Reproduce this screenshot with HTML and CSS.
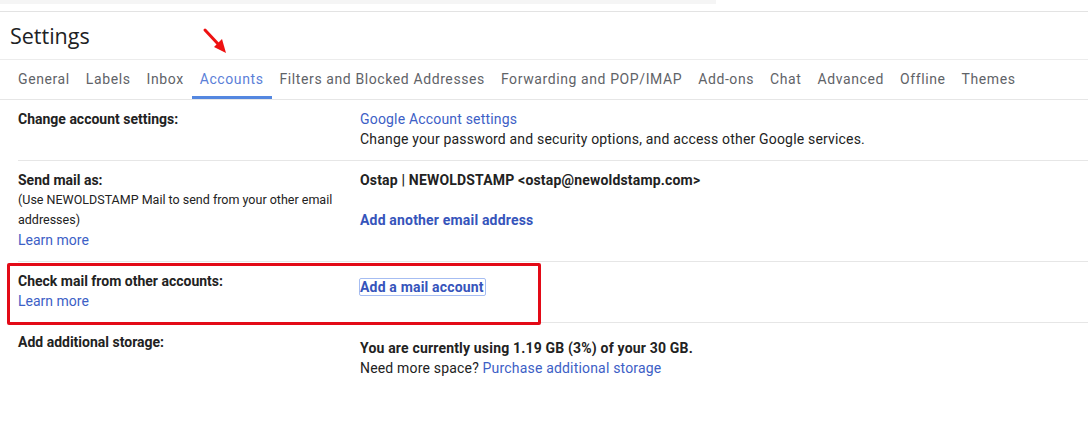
FILE: index.html
```html
<!DOCTYPE html>
<html>
<head>
<meta charset="utf-8">
<link rel="stylesheet" href="styles.css">
</head>
<body>
<div class="page">
  <div class="topstrip"></div>
  <header class="header"><h1 class="title">Settings</h1></header>
  <nav class="tabs">
    <span class="tab">General</span>
    <span class="tab">Labels</span>
    <span class="tab">Inbox</span>
    <span class="tab active">Accounts</span>
    <span class="tab">Filters and Blocked Addresses</span>
    <span class="tab">Forwarding and POP/IMAP</span>
    <span class="tab">Add-ons</span>
    <span class="tab">Chat</span>
    <span class="tab">Advanced</span>
    <span class="tab">Offline</span>
    <span class="tab">Themes</span>
  </nav>
  <main class="rows">
    <section class="row">
      <div class="label"><div class="bold">Change account settings:</div></div>
      <div class="value">
        <div><a class="link">Google Account settings</a></div>
        <div>Change your password and security options, and access other Google services.</div>
      </div>
    </section>
    <section class="row">
      <div class="label">
        <div class="bold">Send mail as:</div>
        <div class="small">(Use NEWOLDSTAMP Mail to send from your other email addresses)</div>
        <div><a class="link">Learn more</a></div>
      </div>
      <div class="value">
        <div class="bold">Ostap | NEWOLDSTAMP &lt;ostap@newoldstamp.com&gt;</div>
        <div class="spaced"><a class="link bold">Add another email address</a></div>
      </div>
    </section>
    <section class="row">
      <div class="label">
        <div class="bold">Check mail from other accounts:</div>
        <div><a class="link">Learn more</a></div>
      </div>
      <div class="value offset">
        <div><a class="link bold focused">Add a mail account</a></div>
      </div>
    </section>
    <section class="row last">
      <div class="label"><div class="bold">Add additional storage:</div></div>
      <div class="value offset">
        <div class="bold">You are currently using 1.19 GB (3%) of your 30 GB.</div>
        <div>Need more space? <a class="link">Purchase additional storage</a></div>
      </div>
    </section>
  </main>
  <div class="highlight"></div>
  <svg class="arrow" width="40" height="40" viewBox="0 0 40 40">
    <line x1="3" y1="3" x2="17" y2="18" stroke="#ee1111" stroke-width="3" stroke-linecap="round"/>
    <polygon points="24,26 12,20 20,12" fill="#ee1111"/>
  </svg>
</div>
</body>
</html>
```
FILE: styles.css
```css
* { box-sizing: border-box; }
html, body { margin: 0; padding: 0; background: #fff; }
body {
  font-family: Roboto, "Liberation Sans", Arial, sans-serif;
  font-size: 14px;
  color: #222;
  width: 1088px;
  height: 427px;
  overflow: hidden;
}
.page { position: relative; width: 1088px; height: 427px; }
.topstrip { width: 716px; height: 4px; background: #f5f5f5; }
.header {
  margin-top: 7px;
  border-top: 1px solid #e3e3e3;
  height: 48px;
  display: flex;
  align-items: center;
  padding-left: 10px;
}
.title {
  margin: 0;
  font-family: "Open Sans", Roboto, sans-serif;
  font-weight: 400;
  font-size: 21.5px;
  color: #202124;
}
.tabs {
  border-top: 1px solid #ececec;
  border-bottom: 1px solid #e6e6e6;
  height: 41px;
  display: flex;
  padding-left: 10px;
}
.tab {
  padding: 1px 8px 0;
  display: flex;
  align-items: center;
  font-family: Roboto, sans-serif;
  font-size: 14px;
  letter-spacing: 0.6px;
  color: #5f6368;
  border-bottom: 3px solid transparent;
}
.tab.active { color: #5b80d8; border-bottom-color: #5487e0; }
.rows { display: flex; flex-direction: column; }
.row {
  margin-left: 18px;
  display: grid;
  grid-template-columns: 342px 1fr;
  padding: 9px 0 11px;
  border-bottom: 1px solid #e6e6e6;
  line-height: 20px;
}
.row.last { border-bottom: none; }
.label { width: 320px; }
.value { letter-spacing: 0.18px; }
.bold { font-weight: 700; }
.small { font-size: 12.5px; }
.link { color: #3d60c6; text-decoration: none; cursor: pointer; }
.link.bold { color: #3654bb; }
.spaced { margin-top: 20px; }
.offset { padding-top: 6px; }
.focused {
  border: 1px solid #a6bdf2;
  border-radius: 2px;
  padding: 0 1px 0 0;
  margin-left: -1px;
}
.highlight {
  position: absolute;
  left: 7px;
  top: 263px;
  width: 534px;
  height: 62px;
  border: 3px solid #e30a17;
  border-radius: 2px;
}
.arrow { position: absolute; left: 202px; top: 27px; }
```
